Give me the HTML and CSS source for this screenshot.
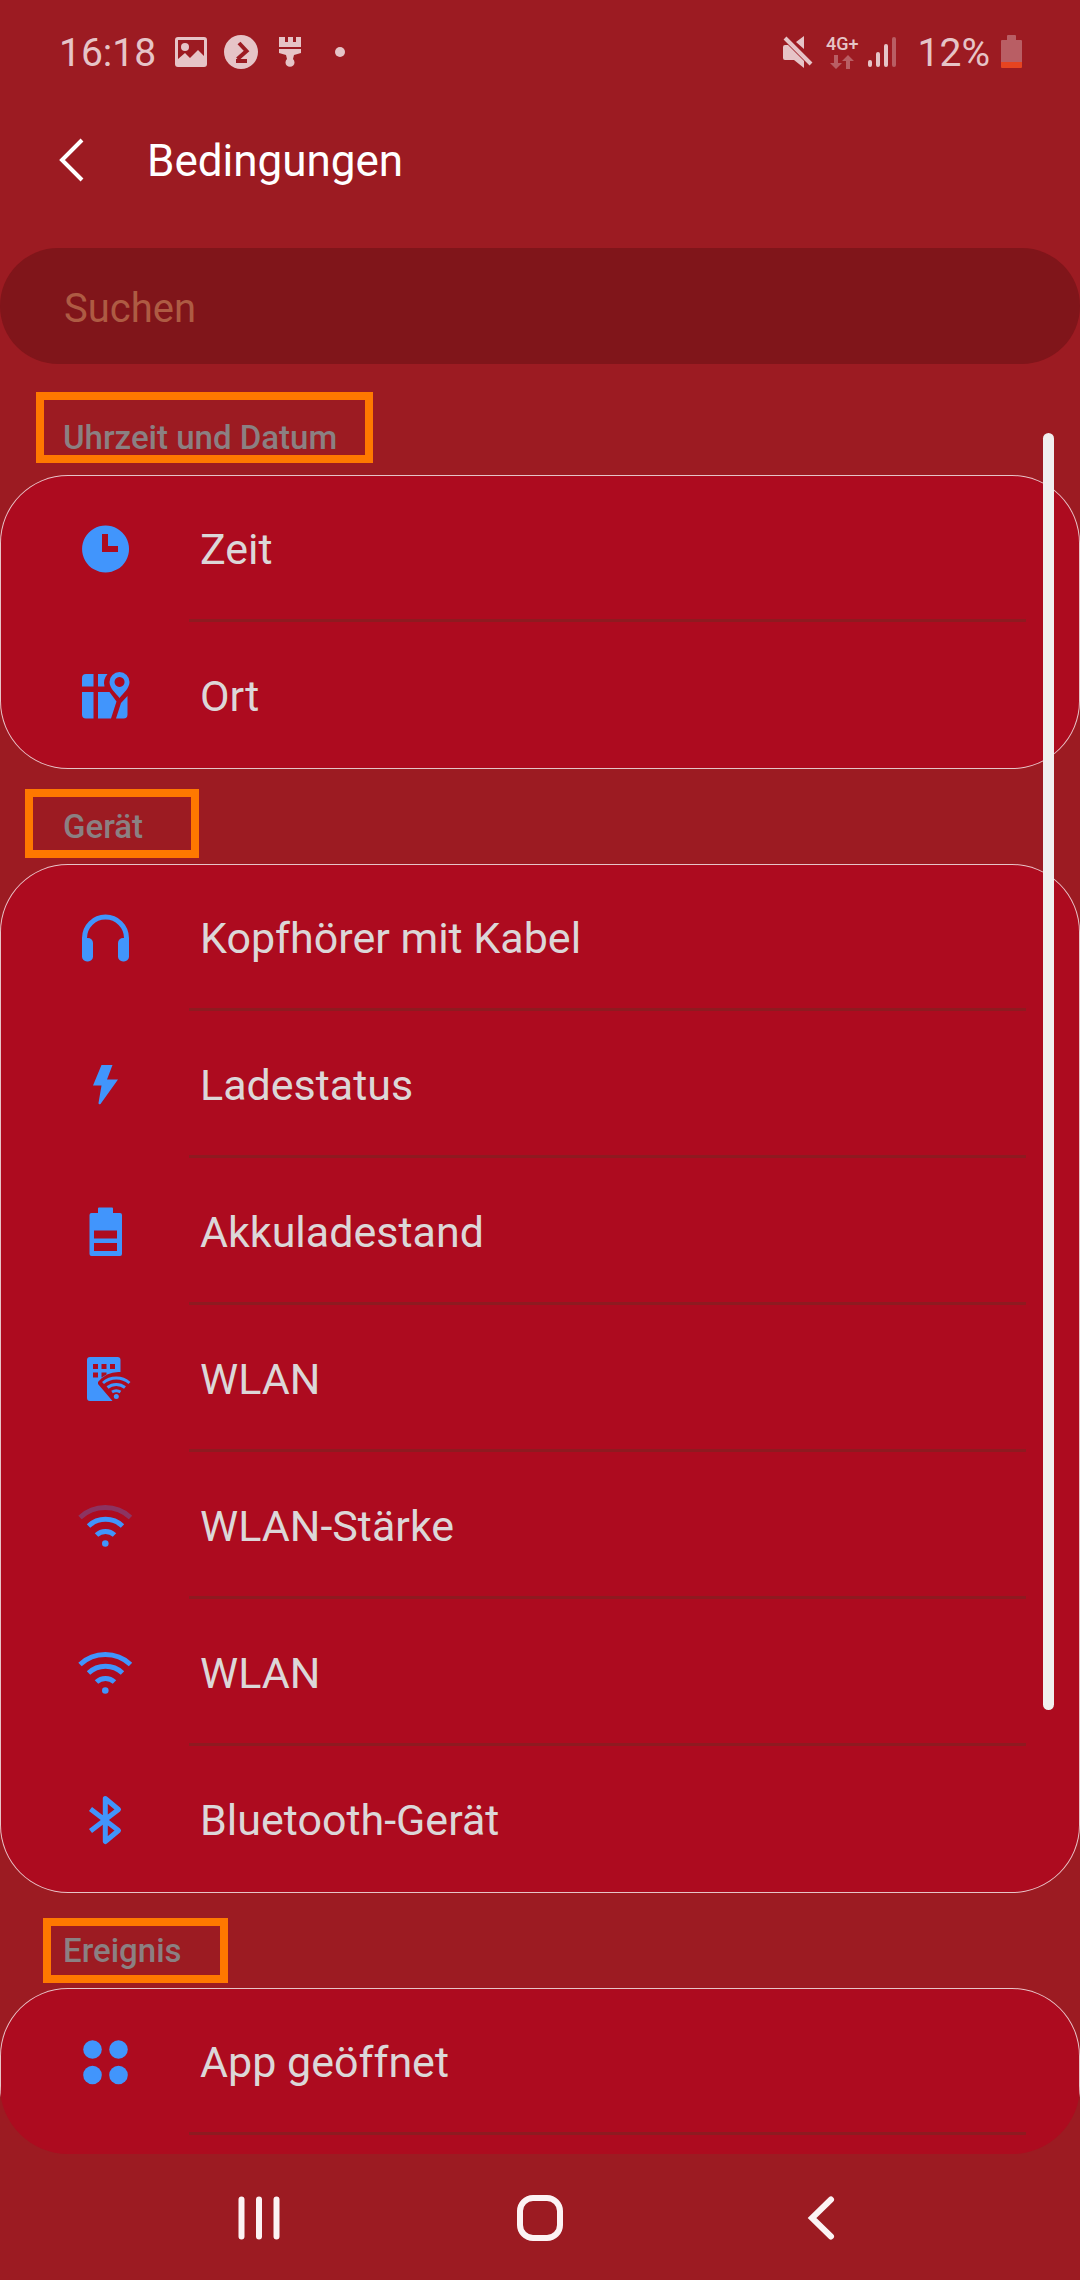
FILE: index.html
```html
<!DOCTYPE html>
<html lang="de">
<head>
<meta charset="utf-8">
<meta name="viewport" content="width=device-width, initial-scale=1">
<title>Bedingungen</title>
<link rel="stylesheet" href="styles.css">
</head>
<body>
<div class="screen">
  <div class="status">
    <div class="status-group">
      <span class="status-text">16:18</span>
      <svg class="notice notice-photo" width="32" height="30" viewBox="0 0 32 30" aria-hidden="true"><path fill-rule="evenodd" d="M3 0h26a3 3 0 0 1 3 3v24a3 3 0 0 1-3 3H3a3 3 0 0 1-3-3V3a3 3 0 0 1 3-3zM3 3v19l7-6 5 5 8-8 6 6V3z"/><circle cx="10" cy="10" r="4"/></svg>
      <svg class="notice" width="34" height="34" viewBox="0 0 34 34" aria-hidden="true"><circle cx="17" cy="17" r="17"/><path class="cut" d="M15 8l7.500 8-9 8M12 26h11"/></svg>
      <svg class="notice" width="24" height="30" viewBox="0 0 24 30" aria-hidden="true"><path d="M1 0h6v5h3V0h5v5h3V0h5v10H1zM1 12h22v4l-7 2-1 4a4.500 4.500 0 1 1-6 0l-1-4-7-2z"/></svg>
      <span class="dot"></span>
    </div>
    <div class="status-group">
      <svg width="30" height="32" viewBox="0 0 30 32" aria-hidden="true"><path d="M0 11q0-2 2-2h3l16 16v7l-10-8H2q-2 0-2-2zM13 6l8-6v13z"/><path class="line" d="M2 2l26 26"/></svg>
      <div class="network">
        <span class="network-type">4G+</span>
        <svg class="faint" width="24" height="14" viewBox="0 0 24 14" aria-hidden="true"><path d="M4 0h4v8h4l-6 6-6-6h4zM16 14V6h-4l6-6 6 6h-4v8z"/></svg>
      </div>
      <svg width="28" height="32" viewBox="0 0 28 32" aria-hidden="true"><rect y="24" width="4" height="7" rx="2"/><rect x="8" y="16" width="4" height="15" rx="2"/><rect x="16" y="8" width="4" height="23" rx="2"/><rect class="faint" x="24" y="1" width="4" height="30" rx="2"/></svg>
      <span class="status-text percent">12%</span>
      <svg width="21" height="34" viewBox="0 0 21 34" aria-hidden="true"><path class="faint" d="M6 1q0-1 1-1h7q1 0 1 1v4h5q1 0 1 1v21H0V6q0-1 1-1h5z"/><path class="low" d="M0 27h21v5q0 1-1 1H1q-1 0-1-1z"/></svg>
    </div>
  </div>

  <header class="bar">
    <button class="back" type="button" aria-label="Zurück"><svg width="28" height="44" viewBox="0 0 28 44"><path d="M25 2L5 22l20 20"/></svg></button>
    <h1>Bedingungen</h1>
  </header>

  <input class="search" type="search" placeholder="Suchen" aria-label="Suchen">

  <main class="content">
    <div class="list">
      <section>
        <h2>Uhrzeit und Datum<span class="frame frame-time"></span></h2>
        <ul class="card">
          <li><button type="button"><svg viewBox="0 0 56 56"><path fill-rule="evenodd" d="M27.500 4.500a23.500 23.500 0 1 0 .1 0zM24 13h6v12h10v6H24z"/></svg>Zeit</button></li>
          <li><button type="button"><svg viewBox="0 0 56 56"><path fill-rule="evenodd" d="M8 6h7.500v12.500H4V10q0-4 4-4zM20 6h9.500q-5 6-3 12.500H20zM4 24h11.500v26.500H8q-4 0-4-4zM20 24h11.500l7 9.500-5.500 17H20zM49.500 28v18.500q0 4-4 4H38L43 35zM41.500 4a10 10 0 0 1 10 10c0 6-6 11-10 16-4-5-10-10-10-16a10 10 0 0 1 10-10zm0 5a5 5 0 1 0 .1 0z"/></svg>Ort</button></li>
        </ul>
      </section>
      <section>
        <h2>Gerät<span class="frame frame-device"></span></h2>
        <ul class="card">
          <li><button type="button"><svg viewBox="0 0 56 56"><path class="stroke w5" d="M6.500 34v-6a21 21 0 0 1 42 0v6"/><rect x="4" y="28" width="11" height="23.500" rx="5"/><rect x="40" y="28" width="11" height="23.500" rx="5"/></svg>Kopfhörer mit Kabel</button></li>
          <li><button type="button"><svg viewBox="0 0 56 56"><path d="M23.500 8H34.500L29 22.500H40L22.500 47q-2 1-2-1L23.500 28.500H15z"/></svg>Ladestatus</button></li>
          <li><button type="button"><svg viewBox="0 0 56 56"><path fill-rule="evenodd" d="M21 3.500h13q1 0 1 1V9h7q2 0 2 2v39q0 2-2 2H13.500q-2 0-2-2V11q0-2 2-2H20V4.500q0-1 1-1zM16 26.500v8h23v-8zM16 39v8h23v-8z"/></svg>Akkuladestand</button></li>
          <li><button type="button"><svg viewBox="0 0 56 56"><path fill-rule="evenodd" d="M12 6h27.500q3 0 3 3v12Q29 20 20 31v2L34.500 50H12q-3 0-3-3V9q0-3 3-3zM15 13v5h5v-5zM23.500 13v5h5v-5zM32 13v5h5v-5zM15 21.500v5h5v-5zM23.500 21.500v5l5-3v-2z"/><path class="stroke w3" d="M25 32a20 20 0 0 1 26.500 0M29.500 36.500a14 14 0 0 1 17.500 0M34 41a8 8 0 0 1 8.500 0"/><circle cx="38.300" cy="45.500" r="2.500"/></svg>WLAN</button></li>
          <li><button type="button"><svg viewBox="0 0 56 56"><path class="stroke w5 dim" d="M2 19.500a37 37 0 0 1 50.500 0"/><path class="stroke w5" d="M10.500 28a25 25 0 0 1 34 0M18.500 37a13 13 0 0 1 18 0"/><circle cx="27.300" cy="45.500" r="3.300"/></svg>WLAN-Stärke</button></li>
          <li><button type="button"><svg viewBox="0 0 56 56"><path class="stroke w5" d="M2 19.500a37 37 0 0 1 50.500 0M10.500 28a25 25 0 0 1 34 0M18.500 37a13 13 0 0 1 18 0"/><circle cx="27.300" cy="45.500" r="3.300"/></svg>WLAN</button></li>
          <li><button type="button"><svg viewBox="0 0 56 56"><path class="stroke w5 round" d="M12.500 17L40.500 38.500 27.300 49.500V6.500L40.500 17.500 12.500 39"/></svg>Bluetooth-Gerät</button></li>
        </ul>
      </section>
      <section>
        <h2>Ereignis<span class="frame frame-event"></span></h2>
        <ul class="card">
          <li><button type="button"><svg viewBox="0 0 56 56"><circle cx="14.500" cy="15.500" r="9.300"/><circle cx="40.500" cy="15.500" r="9.300"/><circle cx="14.500" cy="41" r="9.300"/><circle cx="40.500" cy="41" r="9.300"/></svg>App geöffnet</button></li>
          <li class="blank" aria-hidden="true"></li>
        </ul>
      </section>
    </div>
    <span class="thumb"></span>
  </main>

  <nav class="nav">
    <button type="button" aria-label="Letzte Apps"><svg width="48" height="48" viewBox="0 0 48 48"><path d="M6.500 6.500v37M24 6.500v37M41.500 6.500v37"/></svg></button>
    <button type="button" aria-label="Startseite"><svg width="48" height="48" viewBox="0 0 48 48"><rect x="4" y="5" width="40" height="40" rx="13"/></svg></button>
    <button type="button" aria-label="Zurück"><svg width="48" height="48" viewBox="0 0 48 48"><path d="M34 6.500L15 25l19 18.500"/></svg></button>
  </nav>
</div>
</body>
</html>
```
FILE: styles.css
```css
* {
  box-sizing: border-box;
}

body {
  margin: 0;
  background: #9c1b22;
  font-family: Roboto, "Liberation Sans", sans-serif;
}

button {
  margin: 0;
  padding: 0;
  border: 0;
  background: none;
  color: inherit;
  font: inherit;
}

svg {
  display: block;
  flex: none;
}

.screen {
  display: flex;
  flex-direction: column;
  height: 100vh;
}

/* Status bar */

.status {
  display: flex;
  justify-content: space-between;
  flex: none;
  height: 104px;
  padding: 0 58px 0 59px;
  color: #e6c4c7;
}

.status-group {
  display: flex;
  align-items: center;
}

.status svg {
  fill: currentColor;
}

.status-text {
  padding-top: 2px;
  font-size: 39px;
  line-height: 48px;
}

.notice {
  margin-left: 20px;
}

.notice-photo {
  margin-left: 19px;
  margin-right: -3px;
}

.cut {
  fill: none;
  stroke: #9c1b22;
  stroke-width: 4;
}

.line {
  stroke: currentColor;
  stroke-width: 4;
}

.dot {
  width: 10px;
  height: 10px;
  margin-left: 33px;
  border-radius: 50%;
  background: currentColor;
}

.network {
  display: flex;
  flex-direction: column;
  align-items: center;
  gap: 2px;
  margin: 0 9px 0 13px;
}

.network-type {
  font-size: 18px;
  font-weight: 500;
  line-height: 18px;
}

.faint {
  opacity: .4;
}

.status .low {
  fill: #e64420;
}

.percent {
  margin: 0 11px 0 22px;
}

/* Title and search */

.bar {
  display: flex;
  align-items: center;
  flex: none;
  gap: 62px;
  height: 112px;
  margin-bottom: 32px;
  padding: 0 57px;
  color: #fff;
}

.back svg {
  fill: none;
  stroke: currentColor;
  stroke-width: 4;
}

h1 {
  margin: 0;
  padding-top: 2px;
  font-size: 44px;
  font-weight: 400;
  line-height: 56px;
}

.search {
  flex: none;
  width: 100%;
  height: 116px;
  margin: 0 0 16px;
  padding: 4px 64px 0;
  border: 0;
  border-radius: 58px;
  background: #80151a;
  color: #fff;
  font-family: inherit;
  font-size: 40px;
  appearance: none;
}

.search::placeholder {
  color: #ae5b43;
  opacity: 1;
}

/* Condition list */

.content {
  position: relative;
  flex: 1;
  min-height: 0;
}

.list {
  height: 100%;
  overflow-y: auto;
  scrollbar-width: none;
  border-radius: 0 0 68px 68px;
}

.thumb {
  position: absolute;
  top: 3%;
  right: 26px;
  width: 11px;
  height: 72%;
  border-radius: 6px;
  background: #f1efef;
}

h2 {
  position: relative;
  height: 95px;
  margin: 0;
  padding: 38px 63px 0;
  color: #8b8082;
  font-size: 33px;
  font-weight: 500;
  line-height: 40px;
}

/* Highlight frames laid over the group names */

.frame {
  position: absolute;
  border: 8px solid #ff7800;
}

.frame-time {
  top: 12px;
  left: 36px;
  width: 337px;
  height: 71px;
}

.frame-device {
  top: 20px;
  left: 25px;
  width: 174px;
  height: 69px;
}

.frame-event {
  top: 25px;
  left: 43px;
  width: 185px;
  height: 65px;
}

.card {
  margin: 0;
  padding: 0;
  border-radius: 68px;
  background: #ad0b1f;
  box-shadow: inset 0 0 0 1px #e6c4c7;
  color: #dcd7d8;
  list-style: none;
}

.card li {
  position: relative;
}

.card li:not(:last-child)::after {
  content: "";
  position: absolute;
  right: 54px;
  bottom: 0;
  left: 189px;
  height: 3px;
  background: #8e1a20;
}

.card button,
.blank {
  display: flex;
  align-items: center;
  gap: 66px;
  width: 100%;
  height: 147px;
  padding: 1px 78px 0;
  font-size: 43px;
  line-height: 52px;
  text-align: left;
}

.card svg {
  width: 56px;
  height: 56px;
  fill: #4195fc;
}

.card .stroke {
  fill: none;
  stroke: #4195fc;
}

.w3 {
  stroke-width: 3;
}

.w5 {
  stroke-width: 5;
}

.round {
  stroke-linejoin: round;
}

.dim {
  opacity: .3;
}

/* System navigation */

.nav {
  display: grid;
  grid-template-columns: repeat(3, 1fr);
  flex: none;
  height: 126px;
  padding: 0 11%;
  color: #fcf3f4;
}

.nav button {
  display: grid;
  place-items: center;
}

.nav svg {
  fill: none;
  stroke: currentColor;
  stroke-width: 6;
  stroke-linecap: round;
}
```
